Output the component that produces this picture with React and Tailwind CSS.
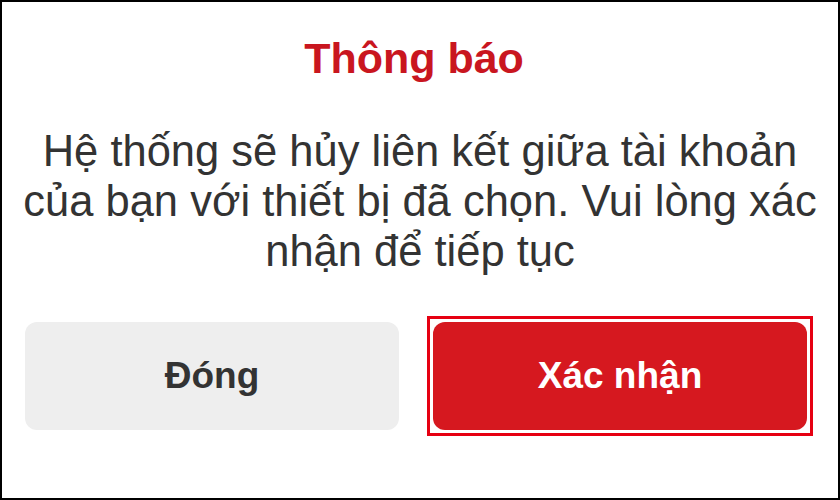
export default function App() {
  return (
    <div className="w-[840px] h-[500px] bg-white border-2 border-black flex flex-col items-center" style={{ fontFamily: '"Liberation Sans", Arial, sans-serif' }}>
      <div className="mt-[31px] mr-[12px] text-[43px] leading-[50px] font-bold text-[#c9161f]">Thông báo</div>
      <div className="mt-[43px] w-full text-center text-[43.5px] leading-[50px] text-[#333333]">
        <div>Hệ thống sẽ hủy liên kết giữa tài khoản</div>
        <div>của bạn với thiết bị đã chọn. Vui lòng xác</div>
        <div>nhận để tiếp tục</div>
      </div>
      <div className="mt-[40px] w-full flex items-center pl-[23px] gap-[28px]">
        <div className="w-[374px] h-[108px] rounded-[12px] bg-[#eeeeee] flex items-center justify-center text-[37px] font-bold text-[#333333]">Đóng</div>
        <div className="border-[3px] border-[#e60012] p-[3px]">
          <div className="w-[374px] h-[108px] rounded-[12px] bg-[#d6181f] flex items-center justify-center text-[37px] font-bold text-white">Xác nhận</div>
        </div>
      </div>
    </div>
  );
}
